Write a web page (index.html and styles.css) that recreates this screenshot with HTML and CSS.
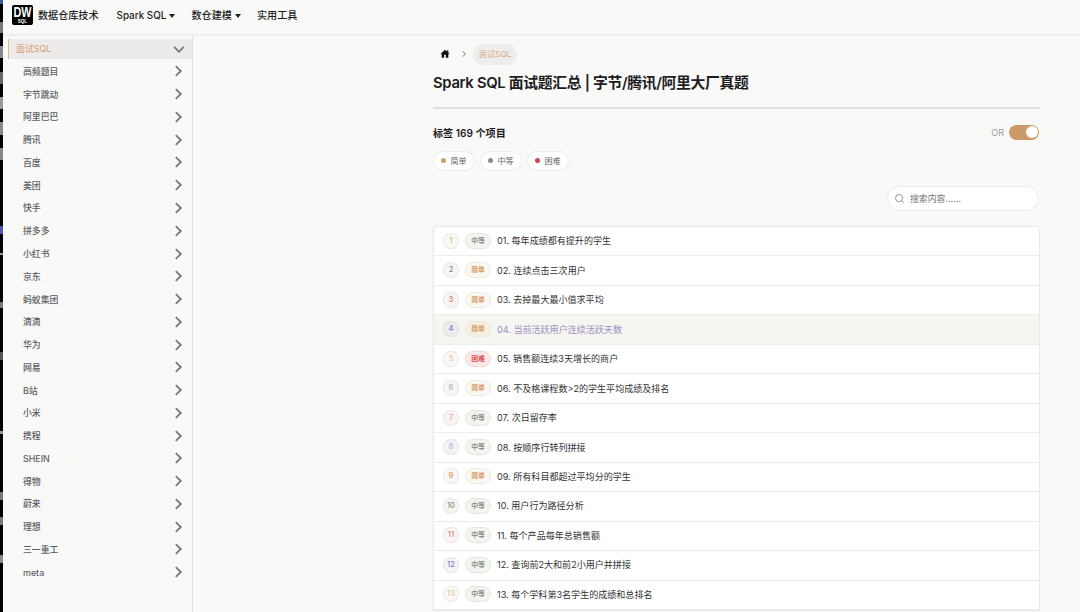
FILE: index.html
```
<!DOCTYPE html>
<html lang="zh-CN">
<head>
  <meta charset="UTF-8" />
  <meta name="viewport" content="width=device-width, initial-scale=1" />
  <title>Spark SQL 面试题汇总</title>
  <link rel="stylesheet" href="styles.css">
</head>
<body>
  <svg class="sprite" aria-hidden="true">
    <symbol id="arrow" viewBox="0 0 12 12"><path d="M3.8 1.2 8.8 6 3.8 10.8" /></symbol>
  </svg>

  <div class="edge"></div>
  <div class="page">
    <header class="navbar">
      <a class="brand" href="#">
        <span class="logo"><b>DW</b><i>SQL</i></span>
        <span>数据仓库技术</span>
      </a>
      <a class="nav-link spark" href="#">Spark SQL<span class="caret"></span></a>
      <a class="nav-link model" href="#">数仓建模<span class="caret"></span></a>
      <a class="nav-link" href="#">实用工具</a>
    </header>

    <div class="layout">
      <aside class="sidebar">
        <a class="menu-head" href="#">面试SQL<svg class="arrow down"><use href="#arrow" /></svg></a>
        <ul class="menu" id="menu"></ul>
      </aside>

      <main class="content">
        <nav class="breadcrumbs">
          <svg class="home" viewBox="0 0 24 24"><path d="M10 21v-7h4v7h6v-9h3l-3-2.8V3h-3v3.4L12 2 1 12h3v9z" /></svg>
          <svg class="sep" viewBox="0 0 8 8"><path d="M2.8 1.4 5.4 4 2.8 6.6" /></svg>
          <span class="crumb">面试SQL</span>
        </nav>
        <h1>Spark SQL 面试题汇总 | 字节/腾讯/阿里大厂真题</h1>

        <div class="filter-head">
          <h2>标签 169 个项目</h2>
          <div class="operator"><span>OR</span><span class="toggle"></span></div>
        </div>
        <div class="tags">
          <span class="tag easy">简单</span>
          <span class="tag medium">中等</span>
          <span class="tag hard">困难</span>
        </div>

        <div class="search">
          <svg viewBox="0 0 12 12"><circle cx="5.5" cy="5.5" r="4.8" /><path d="M9 9 11.5 11.5" /></svg>
          <span>搜索内容……</span>
        </div>

        <ol class="list" id="list"></ol>
      </main>
    </div>
  </div>

  <script>
    const companies = ["高频题目", "字节跳动", "阿里巴巴", "腾讯", "百度", "美团", "快手", "拼多多", "小红书", "京东", "蚂蚁集团", "滴滴", "华为", "网易", "B站", "小米", "携程", "SHEIN", "得物", "蔚来", "理想", "三一重工", "meta"];

    const levels = { easy: "简单", medium: "中等", hard: "困难" };

    // [level, title, number colour]
    const questions = [
      ["medium", "每年成绩都有提升的学生", "gold"],
      ["easy", "连续点击三次用户", "gray"],
      ["easy", "去掉最大最小值求平均", "red"],
      ["easy", "当前活跃用户连续活跃天数", "purple"],
      ["hard", "销售额连续3天增长的商户", "gold pale"],
      ["easy", "不及格课程数>2的学生平均成绩及排名", "gray pale"],
      ["medium", "次日留存率", "red pale"],
      ["medium", "按顺序行转列拼接", "purple pale"],
      ["easy", "所有科目都超过平均分的学生", "orange"],
      ["medium", "用户行为路径分析", "green"],
      ["medium", "每个产品每年总销售额", "red"],
      ["medium", "查询前2大和前2小用户并拼接", "purple"],
      ["medium", "每个学科第3名学生的成绩和总排名", "gold pale"]
    ];

    document.getElementById("menu").innerHTML = companies.map(name =>
      `<li><span>${name}</span><svg class="arrow"><use href="#arrow" /></svg></li>`
    ).join("");

    document.getElementById("list").innerHTML = questions.map(([level, title, color], i) => `
      <li class="${i === 3 ? "row active" : "row"}">
        <span class="num ${color}">${i + 1}</span>
        <span class="level ${level}">${levels[level]}</span>
        <span class="title">${String(i + 1).padStart(2, "0")}. ${title.replace(">", "&gt;")}</span>
      </li>`
    ).join("");
  </script>
</body>
</html>
```
FILE: styles.css
```
:root {
  --bg: #f9f9f7;
  --accent: #cb9a66;
  --text: #1d1d1f;
  --line: #e3e3e2;
}

* {
  box-sizing: border-box;
}

body {
  margin: 0;
  height: 612px;
  overflow: hidden;
  display: flex;
  background: var(--bg);
  color: var(--text);
  font-family: Inter, "Noto Sans CJK SC", sans-serif;
  font-size: 9px;
}

a {
  color: inherit;
  text-decoration: none;
}

ul, ol {
  list-style: none;
  margin: 0;
  padding: 0;
}

.sprite {
  position: absolute;
  width: 0;
  height: 0;
}

/* sliver of the window behind the page */
.edge {
  width: 3px;
  flex: none;
  background: linear-gradient(#3e5a9b 0 4px, #000 4px 22px, #777 22px 33px, #000 33px 46px, #888 46px 58px, #000 58px 72px, #666 72px 84px, #000 84px 97px, #999 97px 109px, #000 109px 122px, #888 122px 135px, #000 135px 148px, #888 148px 160px, #000 160px 226px, #4f55b5 226px 234px, #000 234px 253px, #999 253px 255px, #000 255px 302px, #777 302px 308px, #000 308px 352px, #555 352px 360px, #000 360px 431px, #999 431px 434px, #000 434px 492px, #777 492px 500px, #000 500px 517px, #777 517px 525px, #000 525px 555px, #888 555px 563px, #000 563px);
}

.page {
  flex: 1;
  display: flex;
  flex-direction: column;
}

.navbar {
  height: 35px;
  flex: none;
  display: flex;
  align-items: center;
  padding: 0 0 5px 9px;
  border-bottom: 1px solid #ebebea;
  box-shadow: 0 1px 2px rgba(0, 0, 0, 0.03);
  font-size: 10.1px;
  font-weight: 500;
}

.brand {
  display: flex;
  align-items: center;
  gap: 5px;
  width: 104.5px;
}

.logo {
  width: 21px;
  height: 20px;
  border-radius: 2px;
  background: #000;
  color: #fff;
  display: flex;
  flex-direction: column;
  align-items: center;
  line-height: 1;
}

.logo b {
  font: bold 15px/14px "Liberation Sans", sans-serif;
  transform: scaleX(0.72);
}

.logo i {
  font: bold 4.5px/5px "Liberation Sans", sans-serif;
}

.nav-link {
  display: flex;
  align-items: center;
  gap: 3px;
}

.spark {
  width: 75px;
  font-size: 9.9px;
}

.model {
  width: 65.5px;
}

.caret {
  border: 3.5px solid transparent;
  border-top: 4px solid #222;
  border-bottom: 0;
  margin-top: 3px;
}

.layout {
  flex: 1;
  display: flex;
}

.sidebar {
  width: 190px;
  padding: 4px 0 0 5px;
  border-right: 1px solid var(--line);
  color: #5b5e62;
  font-size: 8.9px;
  font-weight: 500;
}

.menu-head {
  height: 20px;
  display: flex;
  align-items: center;
  justify-content: space-between;
  padding: 0 7px 1px 7px;
  border-left: 1px solid #dfb691;
  background: #ecebe9;
  color: #d3a177;
  font-weight: 400;
}

.menu {
  padding-top: 1px;
}

.menu li {
  height: 22.77px;
  display: flex;
  align-items: center;
  justify-content: space-between;
  padding: 0 8px 0 15px;
}

.arrow {
  width: 12px;
  height: 12px;
  fill: none;
  stroke: #777;
  stroke-width: 1.8;
}

.down {
  transform: rotate(90deg);
}

.content {
  width: 607px;
  margin-left: 240px;
  padding-top: 8px;
}

.breadcrumbs {
  height: 22px;
  display: flex;
  align-items: center;
  padding-left: 7px;
}

.home {
  width: 10px;
  height: 10px;
  fill: #111;
}

.sep {
  width: 8px;
  height: 8px;
  margin: 0 5px 0 10px;
  fill: none;
  stroke: #777;
}

.crumb {
  height: 21px;
  padding: 0 6px;
  border-radius: 11px;
  background: #ededeb;
  color: #d8ad87;
  font-size: 8.1px;
  line-height: 20px;
}

h1 {
  height: 44px;
  margin: 0;
  padding-top: 7px;
  border-bottom: 2px solid #e1e1df;
  font-size: 14.8px;
  font-weight: 600;
  line-height: 22px;
  letter-spacing: -0.31px;
}

.filter-head {
  height: 15px;
  margin-top: 15.5px;
  padding-right: 1px;
  display: flex;
  align-items: center;
  justify-content: space-between;
}

h2 {
  margin: 0;
  font-size: 10.1px;
  font-weight: 600;
}

.operator {
  display: flex;
  align-items: center;
  gap: 5px;
  color: #999;
}

.toggle {
  width: 30px;
  height: 15px;
  padding: 1.5px;
  border-radius: 8px;
  background: var(--accent);
  display: flex;
  justify-content: flex-end;
}

.toggle::after {
  content: "";
  width: 12px;
  border-radius: 50%;
  background: #fff;
}

.tags {
  margin-top: 11.5px;
  display: flex;
  gap: 5px;
}

.tag {
  width: 42px;
  height: 20px;
  padding-bottom: 1px;
  display: flex;
  align-items: center;
  justify-content: center;
  gap: 4px;
  border: 1px solid #ececea;
  border-radius: 10px;
  background: #fff;
  color: #666;
  font-size: 8.1px;
}

.tag::before {
  content: "";
  width: 5px;
  height: 5px;
  border-radius: 50%;
  background: #cba067;
}

.tag.medium::before {
  background: #8a8f7e;
}

.tag.hard::before {
  background: #d34556;
}

.search {
  width: 152px;
  height: 25px;
  margin: 15px 1px 15px auto;
  padding: 0 8px 1px 7px;
  display: flex;
  align-items: center;
  gap: 6px;
  border: 1px solid #ebebea;
  border-radius: 13px;
  background: #fff;
  color: #777;
  font-size: 8.9px;
}

.search svg {
  width: 9px;
  height: 9px;
  fill: none;
  stroke: #777;
}

.list {
  border: 1px solid #e9e9e8;
  border-radius: 4px 4px 0 0;
  background: #fff;
  box-shadow: 0 0 3px rgba(0, 0, 0, 0.05);
}

.row {
  height: 29.48px;
  display: flex;
  align-items: center;
  padding: 0 0 1px 9px;
  border-bottom: 1px solid #ececeb;
  color: #333;
  font-size: 9.05px;
}

.row.active {
  background: #f6f5ef;
}

.row.active .title {
  color: #9d8fc6;
}

.num {
  width: 16px;
  height: 16px;
  margin-right: 6px;
  border: 1px solid currentColor;
  border-color: rgba(0, 0, 0, 0.06);
  border-radius: 50%;
  background: #faf8f5;
  font-size: 7.6px;
  font-weight: 500;
  line-height: 14px;
  text-align: center;
}

.gold { color: #d9ad68; }
.gray { color: #85888c; background: #f6f6f5; }
.red { color: #d17d73; background: #faf4f2; }
.purple { color: #8379c9; background: #f3f3f8; }
.orange { color: #db9461; }
.green { color: #88937f; background: #f5f7f3; }
.gold.pale { color: #ebc8a0; }
.gray.pale { color: #b0b5b2; }
.red.pale { color: #dfaaa2; }
.purple.pale { color: #b9b5dc; }

.level {
  width: 26px;
  height: 16px;
  margin-right: 6px;
  border: 1px solid #e4e7e1;
  border-radius: 8px;
  background: #f3f5f0;
  color: #8b9286;
  font-size: 6.8px;
  font-weight: 600;
  line-height: 14px;
  text-align: center;
}

.level.easy {
  border-color: #f1e8de;
  background: #fbf7f1;
  color: #d49b67;
}

.level.hard {
  border-color: #f6d5d7;
  background: #fce9ea;
  color: #df4c52;
}

.row.active .num {
  background: #ececf0;
}

.row.active .level {
  background: #f5eee1;
}
```
